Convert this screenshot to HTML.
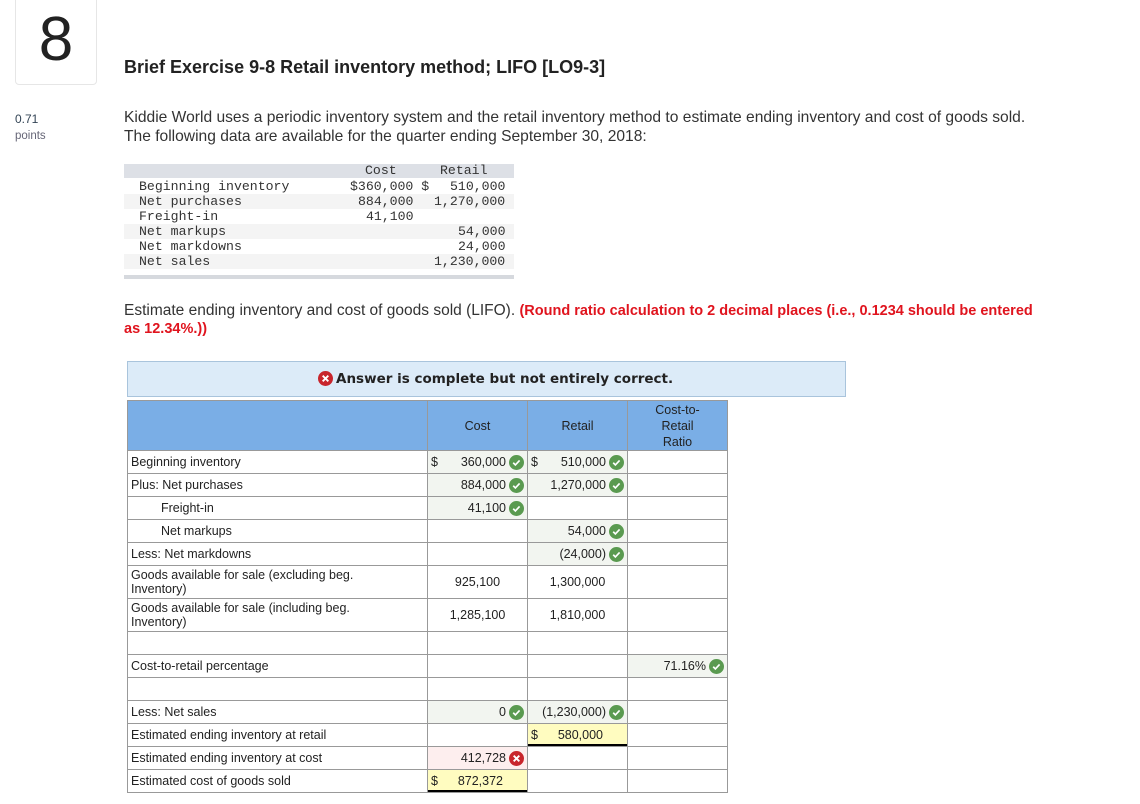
<!DOCTYPE html>
<html><head><meta charset="utf-8"><style>
body{margin:0;width:1140px;height:804px;background:#fff;position:relative;font-family:"Liberation Sans",Arial,sans-serif;color:#333;overflow:hidden}
.a{position:absolute}
.box{left:15px;top:-5px;width:80px;height:88px;border:1px solid #e6e6e6;border-radius:4px;font-size:62px;color:#222;text-align:center;line-height:88px}
.mono{font-family:"Liberation Mono",monospace;font-size:13.2px;color:#333}
.dr{position:absolute;left:124px;width:390px;height:15px;line-height:15px}
.dr span{position:absolute;white-space:pre}
table{border-collapse:collapse;table-layout:fixed;position:absolute;left:127px;top:400px;width:600px;font-size:12.5px;color:#222}
td{border:1px solid #999;height:22px;padding:0 3px;overflow:hidden;line-height:14px}
th{background:#7aaee6;border:1px solid #999;height:49px;padding:0;font-weight:normal;font-size:12.5px;color:#222;line-height:16px}
.r{text-align:right}.c{text-align:center}
.g{background:#f2f5f0}
.y{background:#fffcc0;box-shadow:inset 0 -2px #000}
.p{background:#fdeeee}
.ck{display:inline-block;width:15px;height:15px;vertical-align:-4px;margin-left:3px}
.in{padding-left:33px}
.w{padding-right:65px;height:32px}
</style></head><body>
<div class="a box">8</div>
<div class="a" style="left:124px;top:57px;font-size:18px;font-weight:bold;color:#222">Brief Exercise 9-8 Retail inventory method; LIFO [LO9-3]</div>
<div class="a" style="left:15px;top:112px;font-size:12px;color:#345">0.71</div>
<div class="a" style="left:15px;top:130px;font-size:11.5px;color:#667">points</div>
<div class="a" style="left:124px;top:108px;font-size:15.6px;color:#333;line-height:19px;white-space:nowrap">Kiddie World uses a periodic inventory system and the retail inventory method to estimate ending inventory and cost of goods sold.<br>The following data are available for the quarter ending September 30, 2018:</div>

<div class="a" style="left:124px;top:164px;width:390px;height:14px;background:#dde0e6"></div>
<div class="a" style="left:124px;top:194px;width:390px;height:15px;background:#f4f4f4"></div>
<div class="a" style="left:124px;top:224px;width:390px;height:15px;background:#f4f4f4"></div>
<div class="a" style="left:124px;top:254px;width:390px;height:15px;background:#f4f4f4"></div>
<div class="a" style="left:124px;top:275px;width:390px;height:4px;background:#d6d9de"></div>
<div class="mono">
<div class="dr" style="top:164px;height:14px;line-height:14px"><span style="left:241px">Cost</span><span style="left:316px">Retail</span></div>
<div class="dr" style="top:179px"><span style="left:15px">Beginning inventory</span><span style="left:226px">$360,000 $</span><span style="left:326px">510,000</span></div>
<div class="dr" style="top:194px"><span style="left:15px">Net purchases</span><span style="left:234px">884,000</span><span style="left:310px">1,270,000</span></div>
<div class="dr" style="top:209px"><span style="left:15px">Freight-in</span><span style="left:242px">41,100</span></div>
<div class="dr" style="top:224px"><span style="left:15px">Net markups</span><span style="left:334px">54,000</span></div>
<div class="dr" style="top:239px"><span style="left:15px">Net markdowns</span><span style="left:334px">24,000</span></div>
<div class="dr" style="top:254px"><span style="left:15px">Net sales</span><span style="left:310px">1,230,000</span></div>
</div>

<div class="a" style="left:124px;top:302px;width:925px;font-size:15.5px;line-height:18px;color:#333">Estimate ending inventory and cost of goods sold (LIFO). <b style="color:#e0141e;font-size:14.5px">(Round ratio calculation to 2 decimal places (i.e., 0.1234 should be entered as 12.34%.))</b></div>

<div class="a" style="left:127px;top:361px;width:717px;height:34px;background:#dcebf8;border:1px solid #a9c4dc"></div>
<div class="a" style="left:318px;top:371px;font-size:13.5px;font-weight:bold;color:#222;font-family:'DejaVu Sans',sans-serif"><svg class="ck" style="margin:0 3px 0 0;vertical-align:-3px" viewBox="0 0 16 16"><circle cx="8" cy="8" r="8" fill="#c8252c"/><path d="M5 5l6 6M11 5l-6 6" stroke="#fff" stroke-width="2"/></svg>Answer is complete but not entirely correct.</div>

<svg width="0" height="0" style="position:absolute"><defs><symbol id="ok" viewBox="0 0 16 16"><circle cx="8" cy="8" r="8" fill="#5a9a50"/><path d="M4.5 8.3l2.3 2.3 4.5-4.8" stroke="#fff" stroke-width="1.8" fill="none"/></symbol><symbol id="no" viewBox="0 0 16 16"><circle cx="8" cy="8" r="8" fill="#c8252c"/><path d="M5 5l6 6M11 5l-6 6" stroke="#fff" stroke-width="2"/></symbol></defs></svg>

<table>
<col style="width:300px"><col style="width:100px"><col style="width:100px"><col style="width:100px">
<tr><th></th><th>Cost</th><th>Retail</th><th>Cost-to-<br>Retail<br>Ratio</th></tr>
<tr><td>Beginning inventory</td><td class="r g"><span style="float:left">$</span>360,000<svg class="ck"><use href="#ok"/></svg></td><td class="r g"><span style="float:left">$</span>510,000<svg class="ck"><use href="#ok"/></svg></td><td></td></tr>
<tr><td>Plus: Net purchases</td><td class="r g">884,000<svg class="ck"><use href="#ok"/></svg></td><td class="r g">1,270,000<svg class="ck"><use href="#ok"/></svg></td><td></td></tr>
<tr><td class="in">Freight-in</td><td class="r g">41,100<svg class="ck"><use href="#ok"/></svg></td><td></td><td></td></tr>
<tr><td class="in">Net markups</td><td></td><td class="r g">54,000<svg class="ck"><use href="#ok"/></svg></td><td></td></tr>
<tr><td>Less: Net markdowns</td><td></td><td class="r g">(24,000)<svg class="ck"><use href="#ok"/></svg></td><td></td></tr>
<tr><td class="w">Goods available for sale (excluding beg. Inventory)</td><td class="c" style="border-top:1px solid #000">925,100</td><td class="c" style="border-top:1px solid #000">1,300,000</td><td></td></tr>
<tr><td class="w">Goods available for sale (including beg. Inventory)</td><td class="c" style="border-top:1px solid #000">1,285,100</td><td class="c" style="border-top:1px solid #000">1,810,000</td><td></td></tr>
<tr><td></td><td></td><td></td><td></td></tr>
<tr><td>Cost-to-retail percentage</td><td></td><td></td><td class="r g">71.16%<svg class="ck"><use href="#ok"/></svg></td></tr>
<tr><td></td><td></td><td></td><td></td></tr>
<tr><td>Less: Net sales</td><td class="r g">0<svg class="ck"><use href="#ok"/></svg></td><td class="r g">(1,230,000)<svg class="ck"><use href="#ok"/></svg></td><td></td></tr>
<tr><td>Estimated ending inventory at retail</td><td></td><td class="y" style="padding-right:24px;text-align:right"><span style="float:left">$</span>580,000</td><td></td></tr>
<tr><td>Estimated ending inventory at cost</td><td class="r p">412,728<svg class="ck"><use href="#no"/></svg></td><td></td><td></td></tr>
<tr><td>Estimated cost of goods sold</td><td class="y" style="padding-right:24px;text-align:right"><span style="float:left">$</span>872,372</td><td></td><td></td></tr>
</table>
</body></html>
